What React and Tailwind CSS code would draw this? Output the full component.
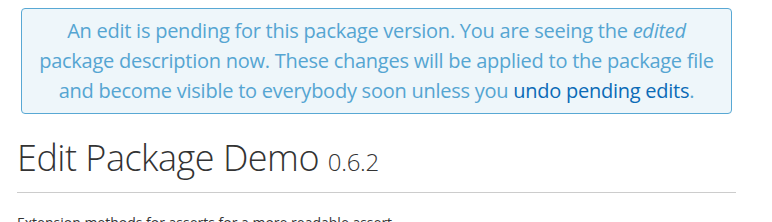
import React from 'react'

// Pending edit notice + package heading
export default function App() {
  return (
    <div className="min-h-screen bg-white text-[#333] font-['Segoe_UI','Open_Sans',sans-serif]">
      <div className="px-[17px] pr-[36px]">
        <div className="mx-[4px] mt-[8px] rounded-[4px] border border-[#58a8d4] bg-[#eef6fa] px-[15px] py-[7px] text-center text-[20px] leading-[30px] text-[#55a5d2] tracking-[-0.25px]">
          An edit is pending for this package version. You are seeing the <em>edited</em>
          <br />
          package description now. These changes will be applied to the package file
          <br />
          and become visible to everybody soon unless you{' '}
          <a href="#" className="text-[#0b6bb7]">undo pending edits</a>.
        </div>

        <h1 className="mt-[22px] text-[36px] font-light leading-[44px] tracking-[-0.5px] text-[#333]">
          Edit Package Demo <small className="text-[24px] tracking-[-0.3px]">0.6.2</small>
        </h1>
        <hr className="mt-[8px] border-t border-[#ccc]" />
        <p className="mt-[20px] text-[14px] leading-[20px] text-[#333]">
          Extension methods for asserts for a more readable assert
        </p>
      </div>
    </div>
  )
}
